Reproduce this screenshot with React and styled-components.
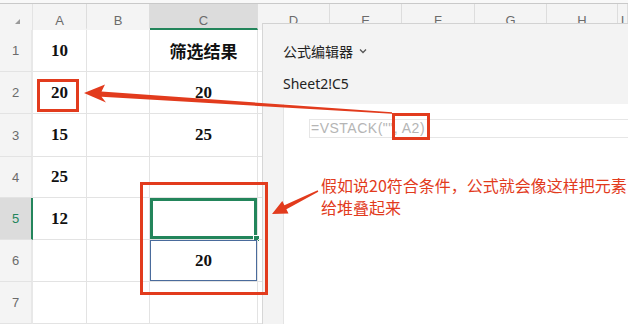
import React from "react";
import styled, { createGlobalStyle, css } from "styled-components";

const GlobalStyle = createGlobalStyle`
  html, body {
    margin: 0;
    padding: 0;
    background: #ffffff;
  }
  * {
    box-sizing: border-box;
  }
`;

const colors = {
  grid: "#e3e3e3",
  headerBg: "#f4f4f4",
  headerActive: "#dcdcdc",
  headerText: "#6b6b6b",
  green: "#23855b",
  spill: "#4a6b9c",
  red: "#e23b1d",
  panelBg: "#f3f3f3",
};

const columns = ["A", "B", "C", "D", "E", "F", "G", "H", "I"];
const rowHeights = [42, 42, 43, 41, 42, 42, 42];

const values = {
  "A1": "10",
  "C1": "筛选结果",
  "A2": "20",
  "C2": "20",
  "A3": "15",
  "C3": "25",
  "A4": "25",
  "A5": "12",
  "C6": "20",
};

const App = () => {
  return (
    <StyledRoot>
      <GlobalStyle />
      <StyledTopStrip />
      <StyledSheet>
        <StyledCorner />
        {columns.map((col) => (
          <StyledColHeader key={col} $active={col === "C"}>
            {col}
          </StyledColHeader>
        ))}
        {rowHeights.map((h, i) => {
          const row = i + 1;
          return (
            <React.Fragment key={row}>
              <StyledRowHeader $active={row === 5}>{row}</StyledRowHeader>
              {columns.map((col) => {
                const id = col + row;
                return (
                  <StyledCell
                    key={id}
                    $selected={id === "C5"}
                    $spill={id === "C6"}
                  >
                    {values[id]}
                  </StyledCell>
                );
              })}
            </React.Fragment>
          );
        })}
      </StyledSheet>

      <StyledPanel>
        <StyledPanelTitle>
          公式编辑器
          <svg width="10" height="8" viewBox="0 0 10 8">
            <path d="M2 2.5 L5 5.5 L8 2.5" fill="none" stroke="#555" strokeWidth="1.3" />
          </svg>
        </StyledPanelTitle>
        <StyledCellRef>Sheet2!C5</StyledCellRef>
        <StyledEditor>
          <StyledFormula>=VSTACK("", A2)</StyledFormula>
        </StyledEditor>
      </StyledPanel>

      <StyledNote>
        假如说20符合条件，公式就会像这样把元素
        <br />
        给堆叠起来
      </StyledNote>

      <StyledOverlay width="628" height="324" viewBox="0 0 628 324">
        <rect x="38.5" y="80.5" width="39" height="30" fill="none" stroke={colors.red} strokeWidth="3" />
        <rect x="141.5" y="183.5" width="125" height="110" fill="none" stroke={colors.red} strokeWidth="3" />
        <rect x="393.5" y="114.5" width="35" height="24" fill="none" stroke={colors.red} strokeWidth="3" />
        <polygon
          points="84,93 105,84.5 101.5,91.6 392,112.3 392,113.7 101.5,96.8 106,102.5"
          fill={colors.red}
        />
        <polygon
          points="272,214 282.3,201 284.4,205.3 317.7,190.3 318.3,191.7 286.4,209.3 288.5,213.6"
          fill={colors.red}
        />
      </StyledOverlay>
    </StyledRoot>
  );
};

export default App;

const StyledRoot = styled.div`
  position: relative;
  width: 628px;
  height: 324px;
  overflow: hidden;
  background: #ffffff;
  font-family: "Liberation Sans", "Noto Sans CJK SC", sans-serif;
`;

const StyledTopStrip = styled.div`
  height: 4px;
  background: #f8f8f8;
  border-bottom: 1px solid #c9c9c9;
`;

const StyledSheet = styled.div`
  display: grid;
  grid-template-columns: 33px 54px 63px 108px 72px 72px 73px 72px 71px 10px;
  grid-template-rows: 26px ${rowHeights.map((h) => `${h}px`).join(" ")};
`;

const StyledCorner = styled.div`
  position: relative;
  background: ${colors.headerBg};
  border-right: 1px solid ${colors.grid};
  &::after {
    content: "";
    position: absolute;
    left: 15px;
    top: 15px;
    border-left: 5px solid transparent;
    border-bottom: 5px solid #9a9a9a;
  }
`;

const StyledColHeader = styled.div`
  display: flex;
  align-items: center;
  justify-content: center;
  padding-top: 8px;
  font-size: 13px;
  color: ${colors.headerText};
  background: ${(p) => (p.$active ? colors.headerActive : colors.headerBg)};
  border-right: 1px solid #dddddd;
  border-bottom: 2px solid ${(p) => (p.$active ? colors.green : "transparent")};
`;

const StyledRowHeader = styled.div`
  display: flex;
  align-items: center;
  justify-content: center;
  font-size: 13px;
  color: ${(p) => (p.$active ? colors.green : colors.headerText)};
  background: ${(p) => (p.$active ? colors.headerActive : colors.headerBg)};
  border-bottom: 1px solid ${colors.grid};
  border-right: 2px solid ${(p) => (p.$active ? colors.green : "#e8e8e8")};
`;

const StyledCell = styled.div`
  position: relative;
  display: flex;
  align-items: center;
  justify-content: center;
  border-right: 1px solid ${colors.grid};
  border-bottom: 1px solid ${colors.grid};
  font-family: "Liberation Serif", "Noto Sans CJK SC", serif;
  font-weight: 700;
  font-size: 17px;
  color: #111111;
  ${(p) =>
    p.$selected &&
    css`
      box-shadow: inset 0 0 0 3px ${colors.green};
      &::after {
        content: "";
        position: absolute;
        right: -3px;
        bottom: -3px;
        width: 5px;
        height: 5px;
        background: ${colors.green};
        border: 1px solid #ffffff;
      }
    `}
  ${(p) =>
    p.$spill &&
    css`
      box-shadow: inset 0 0 0 1px ${colors.spill};
    `}
`;

const StyledPanel = styled.div`
  position: absolute;
  left: 262px;
  top: 23px;
  right: 0;
  bottom: 0;
  display: flex;
  flex-direction: column;
  padding: 17px 0 0 20px;
  background: ${colors.panelBg};
  border-left: 1px solid #d6d6d6;
  border-top: 1px solid #d2d2d2;
`;

const StyledPanelTitle = styled.div`
  display: flex;
  align-items: center;
  gap: 5px;
  height: 20px;
  margin-bottom: 13px;
  font-family: "Noto Sans CJK SC", sans-serif;
  font-size: 14px;
  color: #222222;
`;

const StyledCellRef = styled.div`
  height: 20px;
  line-height: 20px;
  margin-bottom: 10px;
  font-family: "Noto Sans", "Noto Sans CJK SC", sans-serif;
  font-size: 14px;
  color: #222222;
`;

const StyledEditor = styled.div`
  flex: 1;
  padding: 15px 0 0 25px;
  background: #ffffff;
  border-left: 1px solid #e4e4e4;
`;

const StyledFormula = styled.div`
  height: 19px;
  line-height: 17px;
  padding-left: 1px;
  border: 1px solid #e6e6e6;
  border-right: none;
  font-family: "Liberation Sans", sans-serif;
  font-size: 14px;
  letter-spacing: 0.5px;
  color: #b5b5b5;
  white-space: pre;
`;

const StyledNote = styled.div`
  position: absolute;
  left: 321px;
  top: 174px;
  font-family: "Noto Sans CJK SC", sans-serif;
  font-size: 16px;
  line-height: 22px;
  color: ${colors.red};
  white-space: nowrap;
`;

const StyledOverlay = styled.svg`
  position: absolute;
  left: 0;
  top: 0;
  pointer-events: none;
`;
